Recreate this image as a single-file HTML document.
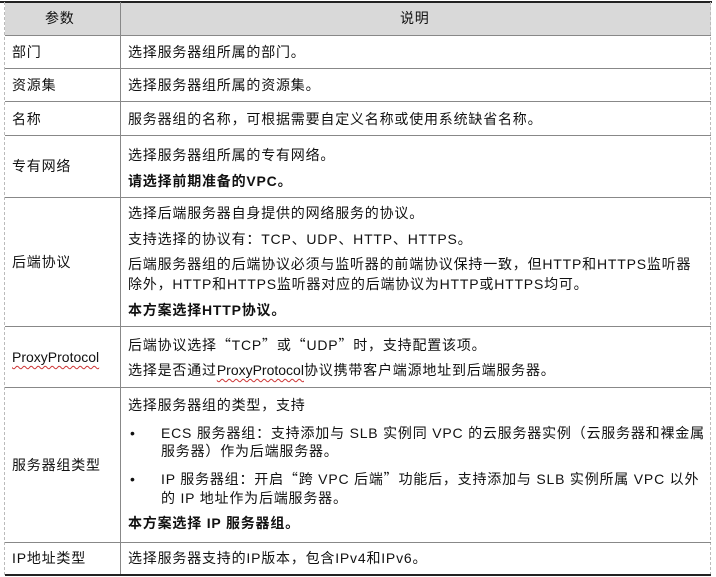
<!DOCTYPE html>
<html><head><meta charset="utf-8"><style>
body{margin:0;width:716px;height:577px;background:#fff;position:relative;overflow:hidden;font-family:"Liberation Sans","Noto Sans CJK SC",sans-serif;font-size:14px;color:#111}
.l{position:absolute;white-space:nowrap;line-height:20px;height:20px;letter-spacing:0.8px}
.h{position:absolute;background:#888;height:1px}
.b{font-weight:bold}
.q{font-family:"Noto Sans CJK SC",sans-serif}
.w{text-decoration:underline wavy #c33;text-decoration-thickness:1px;text-underline-offset:3px;letter-spacing:0}
</style></head><body>
<div style="position:absolute;left:5px;top:2px;width:706px;height:33px;background:#d9d9d9"></div>
<div style="position:absolute;left:0;top:1px;width:712px;height:2px;background:#222"></div>
<div style="position:absolute;left:4px;top:2px;width:0;height:573px;border-left:1px dashed #bbb"></div>
<div style="position:absolute;left:710px;top:2px;width:0;height:573px;border-left:1px dashed #bbb"></div>
<div style="position:absolute;left:120px;top:2px;width:1px;height:573px;background:#888"></div>
<div class="h" style="left:5px;top:35px;width:706px"></div>
<div class="h" style="left:5px;top:68px;width:706px"></div>
<div class="h" style="left:5px;top:101px;width:706px"></div>
<div class="h" style="left:5px;top:135px;width:706px"></div>
<div class="h" style="left:5px;top:197px;width:706px"></div>
<div class="h" style="left:5px;top:326px;width:706px"></div>
<div class="h" style="left:5px;top:387px;width:706px"></div>
<div class="h" style="left:5px;top:542px;width:706px"></div>
<div style="position:absolute;left:5px;top:574px;width:706px;height:2px;background:#222"></div>

<div class="l" style="left:45px;top:8px">参数</div>
<div class="l" style="left:400px;top:8px">说明</div>

<div class="l" style="left:12px;top:42px">部门</div>
<div class="l" style="left:128px;top:42px">选择服务器组所属的部门。</div>
<div class="l" style="left:12px;top:75px">资源集</div>
<div class="l" style="left:128px;top:75px">选择服务器组所属的资源集。</div>
<div class="l" style="left:12px;top:109px">名称</div>
<div class="l" style="left:128px;top:109px">服务器组的名称，可根据需要自定义名称或使用系统缺省名称。</div>
<div class="l" style="left:12px;top:156px">专有网络</div>
<div class="l" style="left:128px;top:145px">选择服务器组所属的专有网络。</div>
<div class="l b" style="left:128px;top:171px">请选择前期准备的VPC。</div>

<div class="l" style="left:12px;top:252px">后端协议</div>
<div class="l" style="left:128px;top:203px">选择后端服务器自身提供的网络服务的协议。</div>
<div class="l" style="left:128px;top:229px">支持选择的协议有：TCP、UDP、HTTP、HTTPS。</div>
<div class="l" style="left:128px;top:254px">后端服务器组的后端协议必须与监听器的前端协议保持一致，但HTTP和HTTPS监听器</div>
<div class="l" style="left:128px;top:274px">除外，HTTP和HTTPS监听器对应的后端协议为HTTP或HTTPS均可。</div>
<div class="l b" style="left:128px;top:300px">本方案选择HTTP协议。</div>

<div class="l" style="left:12px;top:347px"><span class="w">ProxyProtocol</span></div>
<div class="l" style="left:128px;top:335px">后端协议选择<span class="q">“</span>TCP<span class="q">”</span>或<span class="q">“</span>UDP<span class="q">”</span>时，支持配置该项。</div>
<div class="l" style="left:128px;top:360px">选择是否通过<span class="w">ProxyProtocol</span>协议携带客户端源地址到后端服务器。</div>

<div class="l" style="left:12px;top:455px">服务器组类型</div>
<div class="l" style="left:128px;top:395px">选择服务器组的类型，支持</div>
<div class="l" style="left:130px;top:423px">•</div>
<div class="l" style="left:161px;top:423px">ECS 服务器组：支持添加与 SLB 实例同 VPC 的云服务器实例（云服务器和裸金属</div>
<div class="l" style="left:161px;top:441px">服务器）作为后端服务器。</div>
<div class="l" style="left:130px;top:469px">•</div>
<div class="l" style="left:161px;top:469px">IP 服务器组：开启<span class="q">“</span>跨 VPC 后端<span class="q">”</span>功能后，支持添加与 SLB 实例所属 VPC 以外</div>
<div class="l" style="left:161px;top:488px">的 IP 地址作为后端服务器。</div>
<div class="l b" style="left:128px;top:513px">本方案选择 IP 服务器组。</div>

<div class="l" style="left:12px;top:548px">IP地址类型</div>
<div class="l" style="left:128px;top:548px">选择服务器支持的IP版本，包含IPv4和IPv6。</div>
</body></html>
